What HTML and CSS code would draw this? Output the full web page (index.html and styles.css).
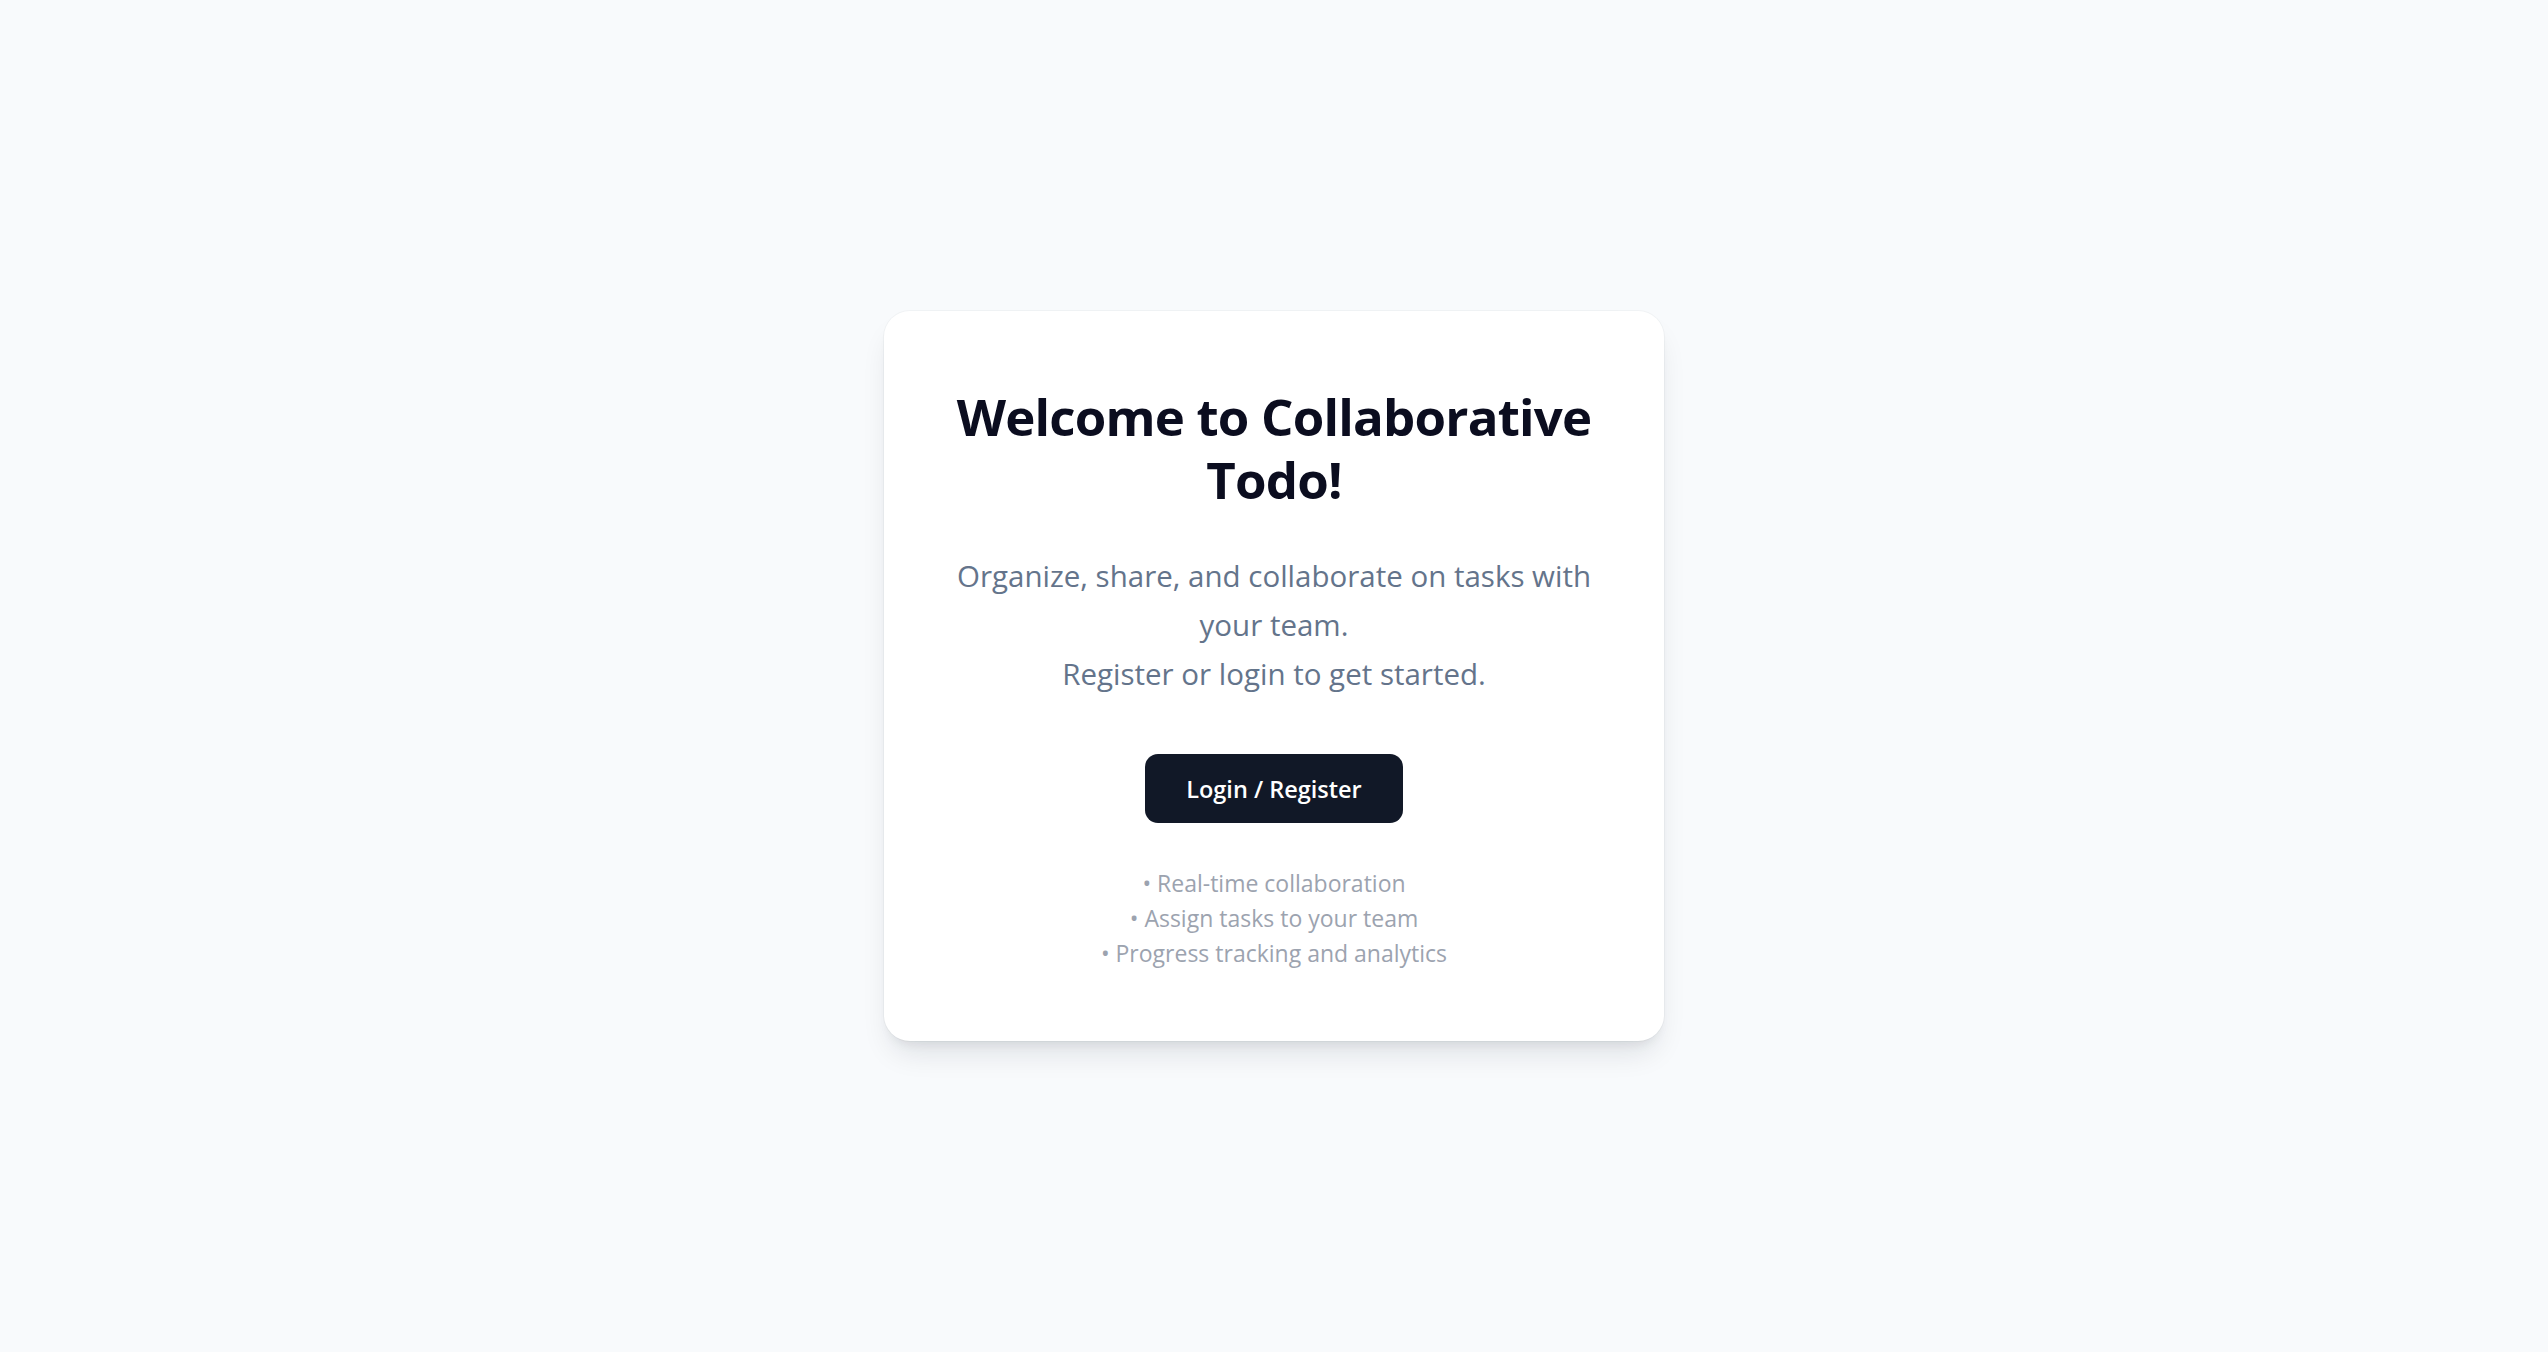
FILE: index.html
```html
<!DOCTYPE html>
<html>
  <head>
    <link rel="stylesheet" href="styles.css">
  </head>
  <body>
    <div class="welcome-card">
      <h1 class="title">Welcome to Collaborative Todo!</h1>

      <p class="intro">
        Organize, share, and collaborate on tasks with your team.<br>
        Register or login to get started.
      </p>

      <button class="login-btn">Login / Register</button>

      <div class="features">
        <div>• Real-time collaboration</div>
        <div>• Assign tasks to your team</div>
        <div>• Progress tracking and analytics</div>
      </div>
    </div>
  </body>
</html>
```

FILE: styles.css
```css
body {
  margin: 0;
  min-height: 100vh;
  background-color: #f8fafc;
  font-family: "Open Sans", "Noto Sans", sans-serif;
  display: flex;
  align-items: center;
  justify-content: center;
}

.welcome-card {
  width: 780px;
  box-sizing: border-box;
  padding: 74px 58px 70px;
  background-color: #fff;
  border-radius: 26px;
  box-shadow: 0 0 0 1px rgba(15, 23, 42, 0.03), 0 18px 30px -8px rgba(15, 23, 42, 0.12),
    0 8px 12px -6px rgba(15, 23, 42, 0.08);
  text-align: center;
}

.title {
  margin: 0;
  font-size: 51px;
  line-height: 63px;
  font-weight: 700;
  color: #0b0d1f;
  letter-spacing: -0.8px;
}

.intro {
  margin: 40px 0 0;
  font-size: 29.5px;
  line-height: 49px;
  color: #64748b;
}

.login-btn {
  margin-top: 56px;
  height: 69px;
  padding: 0 41px;
  border: none;
  border-radius: 13px;
  background-color: #111827;
  color: #fff;
  font-family: inherit;
  font-size: 23.5px;
  font-weight: 600;
  cursor: pointer;
}

.login-btn:hover {
  background-color: #1f2937;
}

.features {
  margin-top: 43px;
  font-size: 23px;
  line-height: 35px;
  color: #9ca3af;
}
```
